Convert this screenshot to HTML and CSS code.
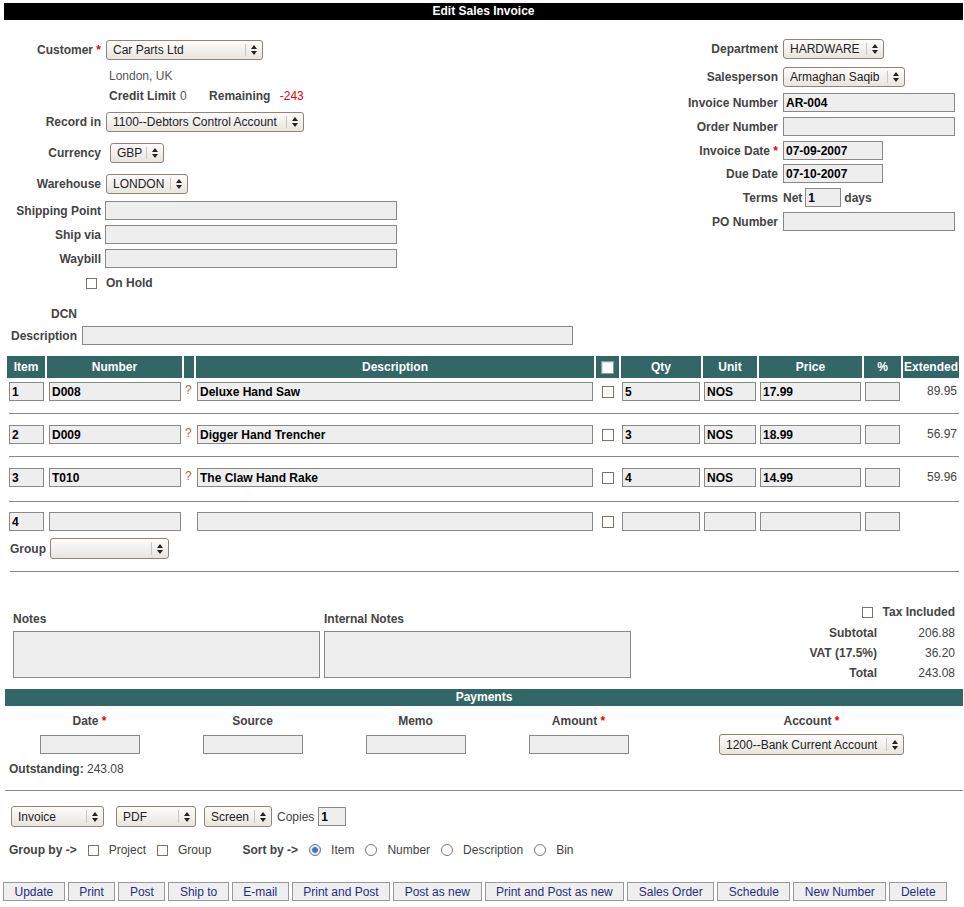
FILE: index.html
```html
<!DOCTYPE html>
<html lang="en">
<head>
    <meta charset="UTF-8">
    <meta name="viewport" content="width=device-width, initial-scale=1.0">
    <title>Edit Sales Invoice</title>
    <link rel="stylesheet" href="styles.css">
</head>
<body>
<div class="page">
    <div class="title-bar">Edit Sales Invoice</div>

    <section class="head">
        <div class="head-left">
            <div class="field">
                <label class="field-label">Customer <span class="req">*</span></label>
                <span class="select w-customer"><select><option>Car Parts Ltd</option></select><span class="arrows"></span></span>
            </div>
            <div class="customer-info">
                <div>London, UK</div>
                <div><b>Credit Limit</b> <span class="credit">0</span> <b class="remain">Remaining</b> <span class="neg">-243</span></div>
            </div>
            <div class="field">
                <label class="field-label">Record in</label>
                <span class="select w-record"><select><option>1100--Debtors Control Account</option></select><span class="arrows"></span></span>
            </div>
            <div class="field loose">
                <label class="field-label">Currency</label>
                <span class="select w-currency"><select><option>GBP</option></select><span class="arrows"></span></span>
            </div>
            <div class="field loose">
                <label class="field-label">Warehouse</label>
                <span class="select w-warehouse"><select><option>LONDON</option></select><span class="arrows"></span></span>
            </div>
            <div class="field nudge-2">
                <label class="field-label">Shipping Point</label>
                <input class="text-input w-ship" type="text">
            </div>
            <div class="field">
                <label class="field-label">Ship via</label>
                <input class="text-input w-ship" type="text">
            </div>
            <div class="field">
                <label class="field-label">Waybill</label>
                <input class="text-input w-ship" type="text">
            </div>
            <div class="field hold">
                <span class="field-label"><input class="check" type="checkbox"></span>
                <b>On Hold</b>
            </div>
        </div>

        <div class="head-right">
            <div class="field">
                <label class="field-label">Department</label>
                <span class="select w-dept"><select><option>HARDWARE</option></select><span class="arrows"></span></span>
            </div>
            <div class="field nudge-3">
                <label class="field-label">Salesperson</label>
                <span class="select w-sales"><select><option>Armaghan Saqib</option></select><span class="arrows"></span></span>
            </div>
            <div class="field nudge-1">
                <label class="field-label">Invoice Number</label>
                <input class="text-input w-wide" type="text" value="AR-004">
            </div>
            <div class="field">
                <label class="field-label">Order Number</label>
                <input class="text-input w-wide" type="text">
            </div>
            <div class="field">
                <label class="field-label">Invoice Date <span class="req">*</span></label>
                <input class="text-input w-date" type="text" value="07-09-2007">
            </div>
            <div class="field tight">
                <label class="field-label">Due Date</label>
                <input class="text-input w-date" type="text" value="07-10-2007">
            </div>
            <div class="field">
                <label class="field-label">Terms</label>
                <span class="terms"><b>Net</b> <input class="text-input w-terms" type="text" value="1"> <b>days</b></span>
            </div>
            <div class="field">
                <label class="field-label">PO Number</label>
                <input class="text-input w-wide" type="text">
            </div>
        </div>
    </section>

    <section class="dcn">
        <div class="field">
            <label class="field-label">DCN</label>
        </div>
        <div class="field">
            <label class="field-label">Description</label>
            <input class="text-input w-desc" type="text">
        </div>
    </section>

    <table class="lines">
        <colgroup>
            <col class="c-item"><col class="c-number"><col class="c-lookup"><col class="c-desc"><col class="c-check">
            <col class="c-qty"><col class="c-unit"><col class="c-price"><col class="c-disc"><col class="c-ext">
        </colgroup>
        <thead>
            <tr>
                <th>Item</th><th>Number</th><th></th><th>Description</th>
                <th><span class="head-box"></span></th>
                <th>Qty</th><th>Unit</th><th>Price</th><th>%</th><th>Extended</th>
            </tr>
        </thead>
        <tbody>
            <tr class="line first">
                <td class="pad-l"><input class="text-input" type="text" value="1"></td>
                <td class="pad-l"><input class="text-input" type="text" value="D008"></td>
                <td class="lookup">?</td>
                <td><input class="text-input" type="text" value="Deluxe Hand Saw"></td>
                <td class="boxcell"><input class="check" type="checkbox"></td>
                <td><input class="text-input" type="text" value="5"></td>
                <td><input class="text-input" type="text" value="NOS"></td>
                <td><input class="text-input" type="text" value="17.99"></td>
                <td><input class="text-input" type="text"></td>
                <td class="ext">89.95</td>
            </tr>
            <tr class="sep"><td colspan="10"><hr></td></tr>
            <tr class="line">
                <td class="pad-l"><input class="text-input" type="text" value="2"></td>
                <td class="pad-l"><input class="text-input" type="text" value="D009"></td>
                <td class="lookup">?</td>
                <td><input class="text-input" type="text" value="Digger Hand Trencher"></td>
                <td class="boxcell"><input class="check" type="checkbox"></td>
                <td><input class="text-input" type="text" value="3"></td>
                <td><input class="text-input" type="text" value="NOS"></td>
                <td><input class="text-input" type="text" value="18.99"></td>
                <td><input class="text-input" type="text"></td>
                <td class="ext">56.97</td>
            </tr>
            <tr class="sep"><td colspan="10"><hr></td></tr>
            <tr class="line">
                <td class="pad-l"><input class="text-input" type="text" value="3"></td>
                <td class="pad-l"><input class="text-input" type="text" value="T010"></td>
                <td class="lookup">?</td>
                <td><input class="text-input" type="text" value="The Claw Hand Rake"></td>
                <td class="boxcell"><input class="check" type="checkbox"></td>
                <td><input class="text-input" type="text" value="4"></td>
                <td><input class="text-input" type="text" value="NOS"></td>
                <td><input class="text-input" type="text" value="14.99"></td>
                <td><input class="text-input" type="text"></td>
                <td class="ext">59.96</td>
            </tr>
            <tr class="sep sep-last"><td colspan="10"><hr></td></tr>
            <tr class="line new-line">
                <td class="pad-l"><input class="text-input" type="text" value="4"></td>
                <td class="pad-l"><input class="text-input" type="text" autofocus></td>
                <td></td>
                <td><input class="text-input" type="text"></td>
                <td class="boxcell"><input class="check" type="checkbox"></td>
                <td><input class="text-input" type="text"></td>
                <td><input class="text-input" type="text"></td>
                <td><input class="text-input" type="text"></td>
                <td><input class="text-input" type="text"></td>
                <td></td>
            </tr>
            <tr class="group-row">
                <td colspan="10">
                    <div class="group-field">
                        <b>Group</b>
                        <span class="select w-group"><select><option></option></select><span class="arrows"></span></span>
                    </div>
                </td>
            </tr>
            <tr class="sep sep-end"><td colspan="10"><hr></td></tr>
        </tbody>
    </table>

    <section class="summary">
        <div class="notes">
            <div class="note-col">
                <label>Notes</label>
                <textarea></textarea>
            </div>
            <div class="note-col">
                <label>Internal Notes</label>
                <textarea></textarea>
            </div>
        </div>
        <div class="totals">
            <span class="tax-box"><input class="check" type="checkbox"></span>
            <b class="amt">Tax Included</b>
            <b class="tlabel">Subtotal</b><span class="amt">206.88</span>
            <b class="tlabel">VAT (17.5%)</b><span class="amt">36.20</span>
            <b class="tlabel">Total</b><span class="amt">243.08</span>
        </div>
    </section>

    <div class="bar">Payments</div>
    <div class="pay-grid">
        <b>Date <span class="req">*</span></b>
        <b>Source</b>
        <b>Memo</b>
        <b>Amount <span class="req">*</span></b>
        <b>Account <span class="req">*</span></b>
        <div class="pay-cell"><input class="text-input w-pay" type="text"></div>
        <div class="pay-cell"><input class="text-input w-pay" type="text"></div>
        <div class="pay-cell"><input class="text-input w-pay" type="text"></div>
        <div class="pay-cell"><input class="text-input w-pay" type="text"></div>
        <div class="pay-cell">
            <span class="select w-account"><select><option>1200--Bank Current Account</option></select><span class="arrows"></span></span>
        </div>
    </div>
    <div class="outstanding"><b>Outstanding:</b> 243.08</div>

    <hr class="rule">

    <div class="print-opts">
        <span class="select w-form"><select><option>Invoice</option></select><span class="arrows"></span></span>
        <span class="select w-format"><select><option>PDF</option></select><span class="arrows"></span></span>
        <span class="select w-media"><select><option>Screen</option></select><span class="arrows"></span></span>
        <span class="copies">Copies</span>
        <input class="text-input w-copies" type="text" value="1">
    </div>

    <div class="sort-opts">
        <b>Group by -&gt;</b>
        <label class="opt"><input class="check" type="checkbox"> Project</label>
        <label class="opt"><input class="check" type="checkbox"> Group</label>
        <b class="sort-label">Sort by -&gt;</b>
        <label class="opt"><input class="radio" type="radio" name="sort" checked> Item</label>
        <label class="opt"><input class="radio" type="radio" name="sort"> Number</label>
        <label class="opt"><input class="radio" type="radio" name="sort"> Description</label>
        <label class="opt"><input class="radio" type="radio" name="sort"> Bin</label>
    </div>

    <div class="actions">
        <button class="btn">Update</button>
        <button class="btn">Print</button>
        <button class="btn">Post</button>
        <button class="btn">Ship to</button>
        <button class="btn">E-mail</button>
        <button class="btn">Print and Post</button>
        <button class="btn">Post as new</button>
        <button class="btn">Print and Post as new</button>
        <button class="btn">Sales Order</button>
        <button class="btn">Schedule</button>
        <button class="btn">New Number</button>
        <button class="btn">Delete</button>
    </div>
</div>
</body>
</html>
```

FILE: styles.css
```css
/* Base */
* {
    box-sizing: border-box;
}

body {
    margin: 0;
    font-family: "Liberation Sans", Arial, sans-serif;
    font-size: 12px;
    color: #444;
    background-color: #fff;
}

.page {
    width: 964px;
    padding: 3px 1px 0 5px;
}

.title-bar {
    margin-left: -1px;
    height: 17px;
    line-height: 17px;
    background-color: #000;
    color: #fff;
    font-weight: bold;
    text-align: center;
}

.req {
    color: #e00;
    font-weight: bold;
}

/* Form controls */
.text-input {
    height: 19px;
    margin: 0;
    padding: 0 2px;
    border: 1px solid #888;
    background-color: #eee;
    font: bold 12px "Liberation Sans", Arial, sans-serif;
    color: #000;
    caret-color: #000;
    outline: none;
}

.select {
    display: inline-flex;
    flex-shrink: 0;
    height: 21px;
    border: 1px solid #8f8578;
    border-radius: 3px;
    background: linear-gradient(#fdfcfb, #e8e5e0);
}
.select select {
    flex: 1;
    min-width: 0;
    margin: 0;
    padding: 0 0 0 6px;
    border: 0;
    background: transparent;
    font: 12px "Liberation Sans", Arial, sans-serif;
    color: #222;
    appearance: none;
    -webkit-appearance: none;
    outline: none;
}
.arrows {
    width: 17px;
    margin: 3px 0;
    border-left: 1px solid #cbc5bc;
    display: flex;
    flex-direction: column;
    align-items: center;
    justify-content: center;
    gap: 2px;
}
.arrows::before, .arrows::after {
    content: "";
    border-left: 3.5px solid transparent;
    border-right: 3.5px solid transparent;
}
.arrows::before {
    border-bottom: 4px solid #222;
}
.arrows::after {
    border-top: 4px solid #222;
}

.check {
    appearance: none;
    -webkit-appearance: none;
    width: 11px;
    height: 11px;
    margin: 0;
    border: 1px solid #7d7366;
    background-color: #fff;
    flex-shrink: 0;
}
.radio {
    appearance: none;
    -webkit-appearance: none;
    width: 12px;
    height: 12px;
    margin: 0;
    border: 1px solid #7d7366;
    border-radius: 50%;
    background-color: #fff;
    flex-shrink: 0;
}
.radio:checked {
    background: radial-gradient(circle, #3c78c3 0 2.5px, #dfe9f6 3.2px);
}

/* widths */
.w-customer { width: 157px; }
.w-record { width: 198px; }
.w-currency { width: 54px; }
.w-warehouse { width: 82px; }
.w-dept { width: 101px; }
.w-sales { width: 122px; }
.w-group { width: 119px; }
.w-account { width: 185px; }
.w-form { width: 93px; }
.w-format { width: 80px; }
.w-media { width: 68px; }
.w-ship { width: 292px; }
.w-wide { width: 172px; }
.w-date { width: 100px; }
.w-terms { width: 36px; }
.w-desc { width: 491px; }
.w-pay { width: 100px; }
.w-copies { width: 28px; }

/* Header block */
.head {
    display: flex;
    justify-content: space-between;
}
.head-left, .head-right {
    display: flex;
    flex-direction: column;
    gap: 5px;
}
.head-left {
    padding-top: 20px;
}
.head-right {
    padding-top: 19px;
    margin-right: 8px;
}
.head .select {
    height: 20px;
}

.field {
    display: flex;
    align-items: center;
    gap: 4px;
}
.field-label {
    width: 96px;
    flex-shrink: 0;
    text-align: right;
    font-weight: bold;
}
.head-left .select {
    margin-left: 1px;
}
.head-left .w-currency {
    margin-left: 5px;
}
.head-right .field {
    gap: 5px;
}
.head-right .field-label {
    width: 100px;
}

.loose { margin-top: 6px; }
.nudge-3 { margin-top: 3px; }
.nudge-2 { margin-top: 2px; }
.nudge-1 { margin-top: 1px; }
.tight { margin-top: -1px; }

.customer-info {
    margin: 1px 0;
    padding-left: 104px;
    line-height: 20px;
    color: #555;
}
.customer-info b {
    color: #444;
}
.credit {
    margin-left: 1px;
}
.remain {
    margin-left: 19px;
    margin-right: 6px;
}
.neg {
    color: #e00;
}

.hold {
    height: 18px;
    margin-top: 1px;
}
.hold .field-label {
    display: flex;
    justify-content: flex-end;
    padding-right: 4px;
}
.hold b {
    margin-left: 1px;
}

.terms {
    display: flex;
    align-items: center;
    gap: 3px;
}

/* DCN block */
.dcn {
    margin-top: 13px;
    display: flex;
    flex-direction: column;
    gap: 3px;
}
.dcn .field {
    gap: 5px;
    min-height: 18px;
}
.dcn .field-label {
    width: 72px;
}

/* Line items */
.lines {
    width: 956px;
    margin-top: 11px;
    border-collapse: separate;
    border-spacing: 2px 0;
    table-layout: fixed;
}
.c-item { width: 38px; }
.c-number { width: 135px; }
.c-lookup { width: 10px; }
.c-desc { width: 398px; }
.c-check { width: 23px; }
.c-qty { width: 80px; }
.c-unit { width: 54px; }
.c-price { width: 103px; }
.c-disc { width: 37px; }
.c-ext { width: 56px; }

.lines th {
    height: 22px;
    padding: 0;
    background-color: #336666;
    color: #fff;
    font-weight: bold;
    text-align: center;
}
.head-box {
    display: inline-block;
    width: 13px;
    height: 13px;
    margin-top: 3px;
    border: 1px solid #999;
    background-color: #fff;
    box-shadow: inset 1px 1px 0 #ddd;
}

.line td {
    padding: 1px;
    vertical-align: top;
}
.line.first td {
    padding-top: 4px;
}
.line .text-input {
    width: 100%;
}
.line td.pad-l {
    padding-left: 2px;
}
.line td.lookup {
    padding-top: 2px;
    color: #b0643a;
    line-height: 14px;
}
.line.first td.lookup {
    padding-top: 5px;
}
.line td.boxcell {
    vertical-align: middle;
    text-align: center;
}
.boxcell .check {
    width: 12px;
    height: 12px;
    display: inline-block;
    vertical-align: middle;
}
.line td.ext {
    padding: 3px 2px 0 0;
    text-align: right;
    line-height: 14px;
    color: #444;
}
.line.first td.ext {
    padding-top: 6px;
}

.sep td {
    padding: 0;
}
.sep hr {
    height: 0;
    margin: 11px 0 10px 2px;
    border: 0;
    border-top: 1px solid #888;
}
.sep-last hr {
    margin-top: 13px;
    margin-bottom: 9px;
}
.sep-end hr {
    margin: 12px 0 0 3px;
}

.group-row td {
    padding: 6px 0 0 3px;
}
.group-field {
    display: flex;
    align-items: center;
    gap: 4px;
}

/* Notes and totals */
.summary {
    display: flex;
    align-items: flex-start;
}
.notes {
    display: flex;
    gap: 4px;
    margin: 39px 0 0 8px;
}
.note-col label {
    display: block;
    font-weight: bold;
    line-height: 16px;
    margin-bottom: 4px;
}
.note-col textarea {
    display: block;
    width: 307px;
    height: 47px;
    margin: 0;
    border: 1px solid #888;
    background-color: #eee;
    resize: none;
}
.totals {
    margin: 29px 8px 0 auto;
    display: grid;
    grid-template-columns: auto 73px;
    grid-template-rows: 22px repeat(3, 20px);
    column-gap: 5px;
    align-items: center;
}
.tax-box {
    display: flex;
    justify-content: flex-end;
    padding-right: 4px;
}
.tlabel, .amt {
    text-align: right;
}

/* Payments */
.bar {
    margin-top: 6px;
    height: 17px;
    line-height: 17px;
    background-color: #336666;
    color: #fff;
    font-weight: bold;
    text-align: center;
}
.pay-grid {
    display: grid;
    grid-template-columns: repeat(4, 163px) 1fr;
    row-gap: 5px;
    margin-left: 3px;
    padding-top: 7px;
    text-align: center;
    line-height: 16px;
}
.pay-cell {
    display: flex;
    justify-content: center;
    align-items: center;
    height: 21px;
}
.outstanding {
    margin-top: 6px;
    padding-left: 4px;
    line-height: 16px;
}

.rule {
    height: 0;
    margin: 13px 0 0;
    border: 0;
    border-top: 1px solid #888;
}

/* Print options */
.print-opts {
    display: flex;
    align-items: center;
    margin: 15px 0 0 6px;
}
.w-format { margin-left: 12px; }
.w-media { margin-left: 8px; }
.copies { margin-left: 5px; margin-right: 4px; }

.sort-opts {
    display: flex;
    align-items: center;
    gap: 11px;
    height: 18px;
    margin: 14px 0 0 4px;
}
.opt {
    display: flex;
    align-items: center;
    gap: 10px;
}
.sort-label {
    margin-left: 20px;
}

/* Buttons */
.actions {
    display: flex;
    gap: 3px;
    margin: 23px 0 0 -2px;
}
.btn {
    height: 19px;
    padding: 0 10.5px;
    border: 1px solid #999;
    background-color: #efefef;
    color: #1f2d85;
    font: 12px "Liberation Sans", Arial, sans-serif;
}
```
